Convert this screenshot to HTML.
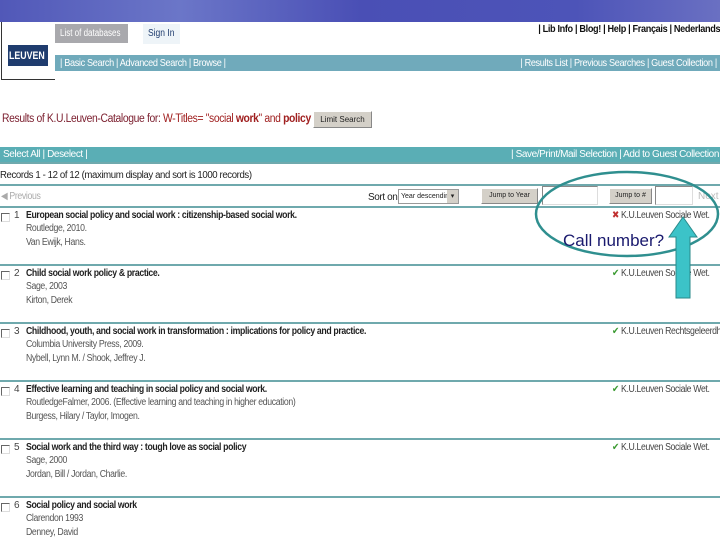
<!DOCTYPE html>
<html><head><style>
*{margin:0;padding:0;box-sizing:border-box}
body{width:720px;height:540px;overflow:hidden;background:#fff;font-family:"Liberation Sans",sans-serif;position:relative;font-size:10px;color:#222}
.a{position:absolute;white-space:nowrap}
.n{letter-spacing:-0.4px}
.s{transform:scaleX(.87);transform-origin:0 0}
.sr{transform:scaleX(.87);transform-origin:100% 0}
.line{position:absolute;left:0;width:720px;height:2px;background:#6fa9ad}
.cb{position:absolute;width:9px;height:9px;border:1px solid #666;border-right-color:#ddd;border-bottom-color:#ddd;left:1px}
.rec{position:absolute;left:0;width:720px;white-space:nowrap}
.rec .num{position:absolute;left:14px;top:0;color:#444}
.rec .t{position:absolute;left:26px;top:0;font-weight:bold;color:#222;transform:scaleX(.87);transform-origin:0 0}
.rec .l{position:absolute;left:26px;color:#555;transform:scaleX(.87);transform-origin:0 0}
.loc{position:absolute;left:612px;color:#444;white-space:nowrap;transform:scaleX(.87);transform-origin:0 0}
</style></head><body>
<div class="a" style="left:0;top:0;width:720px;height:22px;background:linear-gradient(90deg,#5158b8,#6b76c8 25%,#4a4fb5 50%,#4d54b8 80%,#6a70c2)"></div>
<div class="a" style="left:1px;top:22px;width:54px;height:58px;border-left:1px solid #333;border-bottom:1px solid #333"></div>
<div class="a" style="left:8px;top:45px;width:40px;height:21px;background:#1f3c6e;"></div>
<div class="a" style="left:9px;top:50px;color:#fff;font-weight:bold;font-size:11px;transform:scaleX(.8);transform-origin:0 0">LEUVEN</div>
<div class="a" style="left:55px;top:24px;width:73px;height:19px;background:#a9a9ad"></div>
<div class="a" style="left:60px;top:28px;color:#fff;font-size:10px;transform:scaleX(.8);transform-origin:0 0">List of databases</div>
<div class="a" style="left:143px;top:24px;width:37px;height:20px;background:#eef4f8;"></div>
<div class="a" style="left:148px;top:28px;color:#1f3c6e;font-size:10px;transform:scaleX(.85);transform-origin:0 0">Sign In</div>
<div class="a n sr" style="right:0;top:23px;font-size:10.5px;color:#111;font-weight:bold">| Lib Info | Blog! | Help | Français | Nederlands</div>
<div class="a" style="left:55px;top:55px;width:665px;height:16px;background:#70aabb"></div>
<div class="a n s" style="left:60px;top:57px;color:#fff;font-size:10.5px">| Basic Search | Advanced Search | Browse |</div>
<div class="a n sr" style="right:3px;top:57px;color:#fff;font-size:10.5px">| Results List | Previous Searches | Guest Collection |</div>
<div class="a n" style="left:2px;top:113px;font-size:11.5px;color:#7a1c2c;transform:scaleX(.9);transform-origin:0 0">Results of K.U.Leuven-Catalogue for: <span style="color:#a02020">W-Titles= "social <b>work</b>" and <b>policy</b></span></div>
<div class="a" style="left:313px;top:111px;width:59px;height:17px;background:#d4d0c8;border:1px solid #888;border-top-color:#fff;border-left-color:#fff;font-size:8px;text-align:center;line-height:15px">Limit Search</div>
<div class="a" style="left:0;top:147px;width:720px;height:15px;background:#5aaeb5"></div>
<div class="a n" style="left:3px;top:149px;color:#fff">Select All | Deselect |</div>
<div class="a n" style="right:1px;top:149px;color:#fff">| Save/Print/Mail Selection | Add to Guest Collection</div>
<div class="line" style="top:162px"></div>
<div class="a n" style="left:0;top:170px;color:#222;transform:scaleX(.96);transform-origin:0 0">Records 1 - 12 of 12 (maximum display and sort is 1000 records)</div>
<div class="line" style="top:184px"></div>
<div class="a n s" style="left:1px;top:191px;color:#aaa">◀ Previous</div>
<div class="a n" style="left:368px;top:192px;font-size:10px">Sort on</div>
<div class="a" style="left:398px;top:189px;width:61px;height:15px;border:1px solid #999;font-size:7px;line-height:13px;padding-left:2px;background:#fff;overflow:hidden">Year descending<span style="position:absolute;right:0;top:0;width:11px;height:13px;background:#d4d0c8;text-align:center">▾</span></div>
<div class="a" style="left:481px;top:188px;width:57px;height:16px;background:#d4d0c8;border:1px solid #888;border-top-color:#fff;border-left-color:#fff;font-size:7px;text-align:center;line-height:14px">Jump to Year</div>
<div class="a" style="left:542px;top:186px;width:56px;height:19px;border:1px solid #888;border-right-color:#ddd;border-bottom-color:#ddd"></div>
<div class="a" style="left:609px;top:188px;width:43px;height:16px;background:#d4d0c8;border:1px solid #888;border-top-color:#fff;border-left-color:#fff;font-size:7px;text-align:center;line-height:14px">Jump to #</div>
<div class="a" style="left:655px;top:186px;width:38px;height:19px;border:1px solid #888;border-right-color:#ddd;border-bottom-color:#ddd"></div>
<div class="a" style="left:698px;top:191px;color:#bbb">Next</div>
<div class="line" style="top:206px"></div>

<div class="rec" style="top:210px"><div class="cb" style="top:3px"></div><span class="num">1</span><span class="t n">European social policy and social work : citizenship-based social work.</span><div class="l n" style="top:13px">Routledge, 2010.</div><div class="l n" style="top:27px">Van Ewijk, Hans.</div><div class="loc n"><span style="color:#c03030">✖</span> K.U.Leuven Sociale Wet.</div></div>
<div class="line" style="top:264px"></div>
<div class="rec" style="top:268px"><div class="cb" style="top:3px"></div><span class="num">2</span><span class="t n">Child social work policy &amp; practice.</span><div class="l n" style="top:13px">Sage, 2003</div><div class="l n" style="top:27px">Kirton, Derek</div><div class="loc n"><span style="color:#3a9a30">✔</span> K.U.Leuven Sociale Wet.</div></div>
<div class="line" style="top:322px"></div>
<div class="rec" style="top:326px"><div class="cb" style="top:3px"></div><span class="num">3</span><span class="t n">Childhood, youth, and social work in transformation : implications for policy and practice.</span><div class="l n" style="top:13px">Columbia University Press, 2009.</div><div class="l n" style="top:27px">Nybell, Lynn M. / Shook, Jeffrey J.</div><div class="loc n"><span style="color:#3a9a30">✔</span> K.U.Leuven Rechtsgeleerdheid</div></div>
<div class="line" style="top:380px"></div>
<div class="rec" style="top:384px"><div class="cb" style="top:3px"></div><span class="num">4</span><span class="t n">Effective learning and teaching in social policy and social work.</span><div class="l n" style="top:13px">RoutledgeFalmer, 2006. (Effective learning and teaching in higher education)</div><div class="l n" style="top:27px">Burgess, Hilary / Taylor, Imogen.</div><div class="loc n"><span style="color:#3a9a30">✔</span> K.U.Leuven Sociale Wet.</div></div>
<div class="line" style="top:438px"></div>
<div class="rec" style="top:442px"><div class="cb" style="top:3px"></div><span class="num">5</span><span class="t n">Social work and the third way : tough love as social policy</span><div class="l n" style="top:13px">Sage, 2000</div><div class="l n" style="top:27px">Jordan, Bill / Jordan, Charlie.</div><div class="loc n"><span style="color:#3a9a30">✔</span> K.U.Leuven Sociale Wet.</div></div>
<div class="line" style="top:496px"></div>
<div class="rec" style="top:500px"><div class="cb" style="top:3px"></div><span class="num">6</span><span class="t n">Social policy and social work</span><div class="l n" style="top:13px">Clarendon 1993</div><div class="l n" style="top:27px">Denney, David</div></div>

<svg class="a" style="left:0;top:0" width="720" height="540">
<ellipse cx="627" cy="214" rx="91" ry="42" fill="none" stroke="#2f8f8f" stroke-width="2.5"/>
<polygon points="683,217 697,237 690,237 690,298 676,298 676,237 669,237" fill="#3cc3c8" stroke="#2a8a8a" stroke-width="1"/>
<text x="563" y="246" font-family="Liberation Sans,sans-serif" font-size="17" fill="#1a1a6e">Call number?</text>
</svg>
</body></html>
